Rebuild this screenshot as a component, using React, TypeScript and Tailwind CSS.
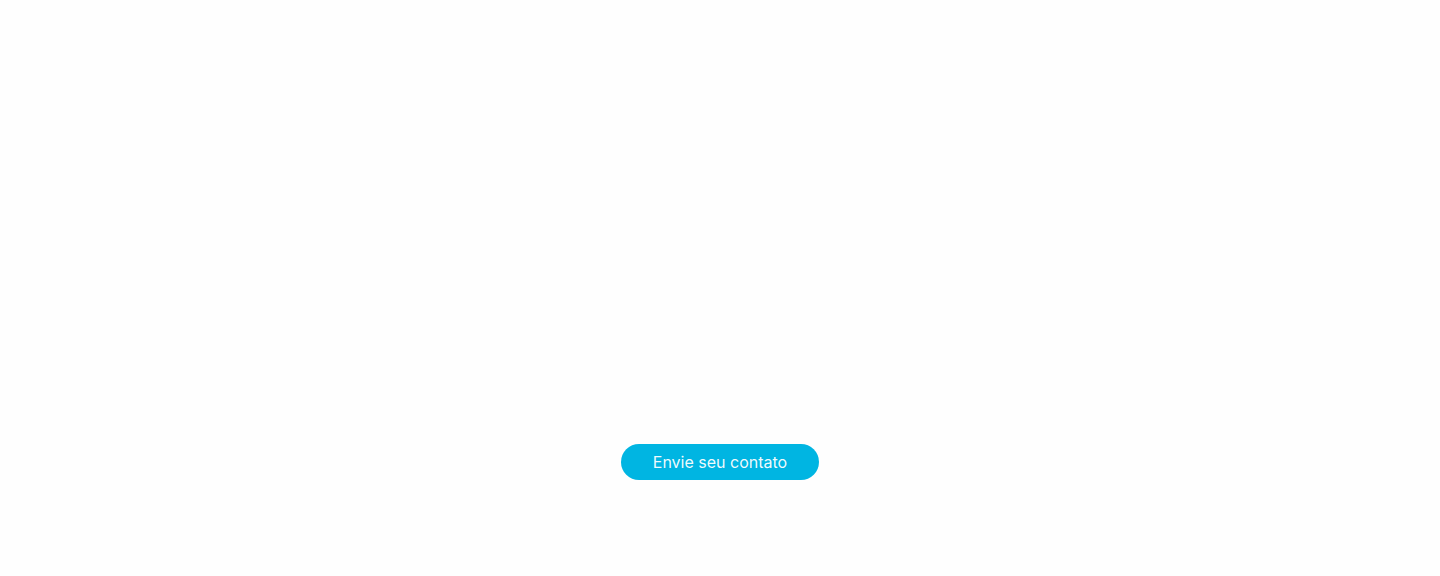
export default function App() {
  return (
    <div
      className="w-full h-[576px] bg-[#fefefe] flex flex-col items-center pt-[444px]"
      style={{ fontFamily: "Inter, 'Noto Sans', sans-serif" }}
    >
      <button className="rounded-full bg-[#00b5e2] px-8 py-1.5 text-base leading-6 text-white/95 font-normal">
        Envie seu contato
      </button>
    </div>
  );
}
